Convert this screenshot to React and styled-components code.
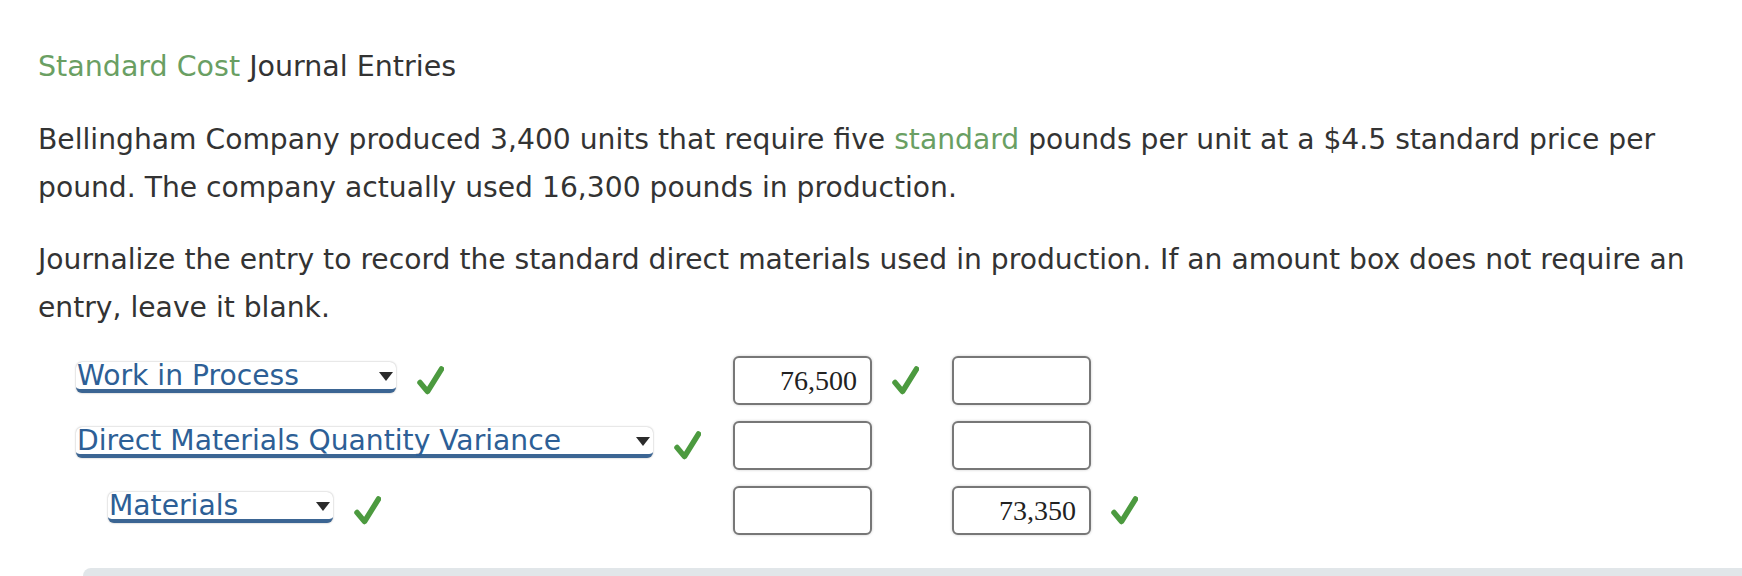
import React from "react";
import styled, { createGlobalStyle } from "styled-components";

const GlobalStyle = createGlobalStyle`
  html, body {
    margin: 0;
    padding: 0;
    background: #fff;
  }
  body {
    font-family: "DejaVu Sans", Verdana, sans-serif;
    color: #333;
    overflow: hidden;
  }
`;

const Page = styled.div`
  padding: 43px 26px 0 38px;
`;

const Title = styled.div`
  font-size: 28.5px;
  line-height: 48px;
  margin-bottom: 25px;
`;

const Green = styled.span`
  color: #6a9f63;
`;

const Para = styled.p`
  font-size: 28.2px;
  line-height: 48px;
  margin: 0 0 24px;
`;

const Entries = styled.div`
  display: grid;
  grid-template-columns: 657px 139px 80px 139px 60px;
  row-gap: 16px;
  margin-left: 38px;
  align-items: center;
`;

const Account = styled.div`
  display: flex;
  align-items: center;
  gap: 21px;
  padding-left: ${(p) => p.indent || 0}px;
`;

const Select = styled.div`
  position: relative;
  box-sizing: border-box;
  width: ${(p) => p.width}px;
  height: 31px;
  margin-bottom: 6px;
  background: #fff;
  border-radius: 6px;
  border-bottom: 4px solid #3b6593;
  box-shadow: 0 0 2px rgba(0, 0, 0, 0.35);
  color: #2d5f96;
  font-size: 28.2px;
  line-height: 27px;
  padding-left: 1px;
  white-space: nowrap;
`;

const Arrow = styled.span`
  position: absolute;
  right: 3px;
  top: 10px;
  width: 0;
  height: 0;
  border-left: 7px solid transparent;
  border-right: 7px solid transparent;
  border-top: 9px solid #2b2b2b;
`;

const Amount = styled.input`
  box-sizing: border-box;
  width: 139px;
  height: 49px;
  border: 2px solid #777;
  border-radius: 6px;
  box-shadow: 0 0 3px rgba(0, 0, 0, 0.2);
  background: #fff;
  font-family: "Liberation Serif", "Times New Roman", serif;
  font-size: 28px;
  color: #222;
  text-align: right;
  padding: 0 13px 0 4px;
  outline: none;
`;

const CheckCell = styled.div`
  display: flex;
  align-items: center;
  padding-left: 20px;
  height: 49px;
`;

const Bar = styled.div`
  margin: 33px -26px 0 45px;
  height: 8px;
  background: #e1e6e9;
  border-top-left-radius: 10px;
`;

function Check() {
  return (
    <svg width="27" height="29" viewBox="0 0 27 29" aria-hidden="true">
      <path
        d="M3 16.5 L10.5 25.5 L24.5 3"
        fill="none"
        stroke="#4c9a3f"
        strokeWidth="5.5"
        strokeLinecap="round"
        strokeLinejoin="round"
      />
    </svg>
  );
}

const rows = [
  { account: "Work in Process", width: 320, indent: 0, debit: "76,500", credit: "" },
  { account: "Direct Materials Quantity Variance", width: 577, indent: 0, debit: "", credit: "" },
  { account: "Materials", width: 225, indent: 32, debit: "", credit: "73,350" },
];

export default function App() {
  return (
    <>
      <GlobalStyle />
      <Page>
        <Title>
          <Green>Standard Cost</Green> Journal Entries
        </Title>
        <Para>
          Bellingham Company produced 3,400 units that require five <Green>standard</Green> pounds
          per unit at a $4.5 standard price per pound. The company actually used 16,300 pounds in
          production.
        </Para>
        <Para>
          Journalize the entry to record the standard direct materials used in production. If an
          amount box does not require an entry, leave it blank.
        </Para>
        <Entries>
          {rows.map((r) => (
            <React.Fragment key={r.account}>
              <Account indent={r.indent}>
                <Select width={r.width}>
                  {r.account}
                  <Arrow />
                </Select>
                <Check />
              </Account>
              <Amount readOnly value={r.debit} />
              <CheckCell>{r.debit && <Check />}</CheckCell>
              <Amount readOnly value={r.credit} />
              <CheckCell>{r.credit && <Check />}</CheckCell>
            </React.Fragment>
          ))}
        </Entries>
        <Bar />
      </Page>
    </>
  );
}
